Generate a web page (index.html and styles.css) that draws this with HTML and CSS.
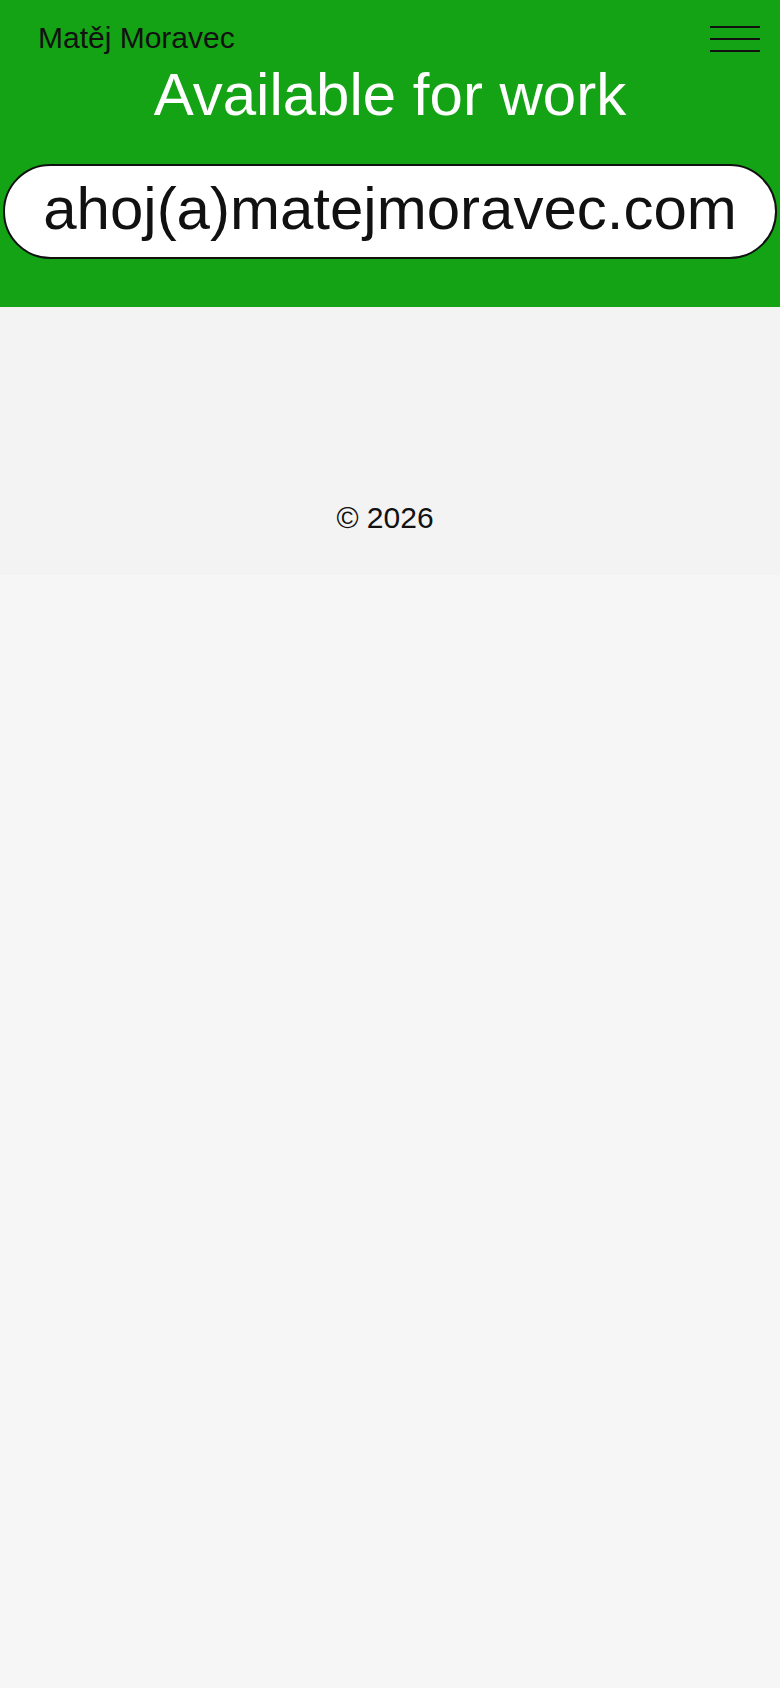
FILE: index.html
```html
<!DOCTYPE html>
<html>
 <head>
  <meta charset="utf-8">
  <title>Matěj Moravec</title>
  <link rel="stylesheet" href="styles.css">
 </head>
 <body>

 <div id="hero">
  <div class="topbar">
    <a class="name" href="#">Matěj Moravec</a>
    <button class="menu" aria-label="Menu">
      <span></span>
      <span></span>
      <span></span>
    </button>
  </div>

  <h1>Available for work</h1>

  <a class="mail" href="#">ahoj(a)matejmoravec.com</a>
 </div>

 <div id="footer">
  <span class="copy">© 2026</span>
 </div>

 </body>
</html>
```

FILE: styles.css
```css
html, body {
  margin: 0;
  background: #f6f6f6;
  font-family: "Liberation Sans", Arial, sans-serif;
  color: #111;
}
#hero {
  background: #14a314;
  padding: 21px 0 48px;
}
.topbar {
  display: flex;
  justify-content: space-between;
  align-items: flex-start;
  padding: 0 20px 0 38px;
}
.name {
  font-size: 30px;
  color: #111;
  text-decoration: none;
}
.menu {
  display: flex;
  flex-direction: column;
  gap: 10px;
  margin-top: 5px;
  padding: 0;
  border: 0;
  background: none;
  cursor: pointer;
}
.menu span {
  display: block;
  width: 50px;
  height: 2px;
  background: #111;
}
h1 {
  margin: 5px 0 0;
  font-size: 60px;
  font-weight: normal;
  color: #fff;
  text-align: center;
}
.mail {
  display: block;
  margin: 35px 3px 0;
  padding: 8px 0 14px;
  background: #fff;
  border: 2px solid #111;
  border-radius: 50px;
  font-size: 60px;
  color: #111;
  text-align: center;
  text-decoration: none;
}
#footer {
  background: #f3f3f3;
  padding: 194px 10px 40px 0;
  text-align: center;
  font-size: 30px;
}
```
